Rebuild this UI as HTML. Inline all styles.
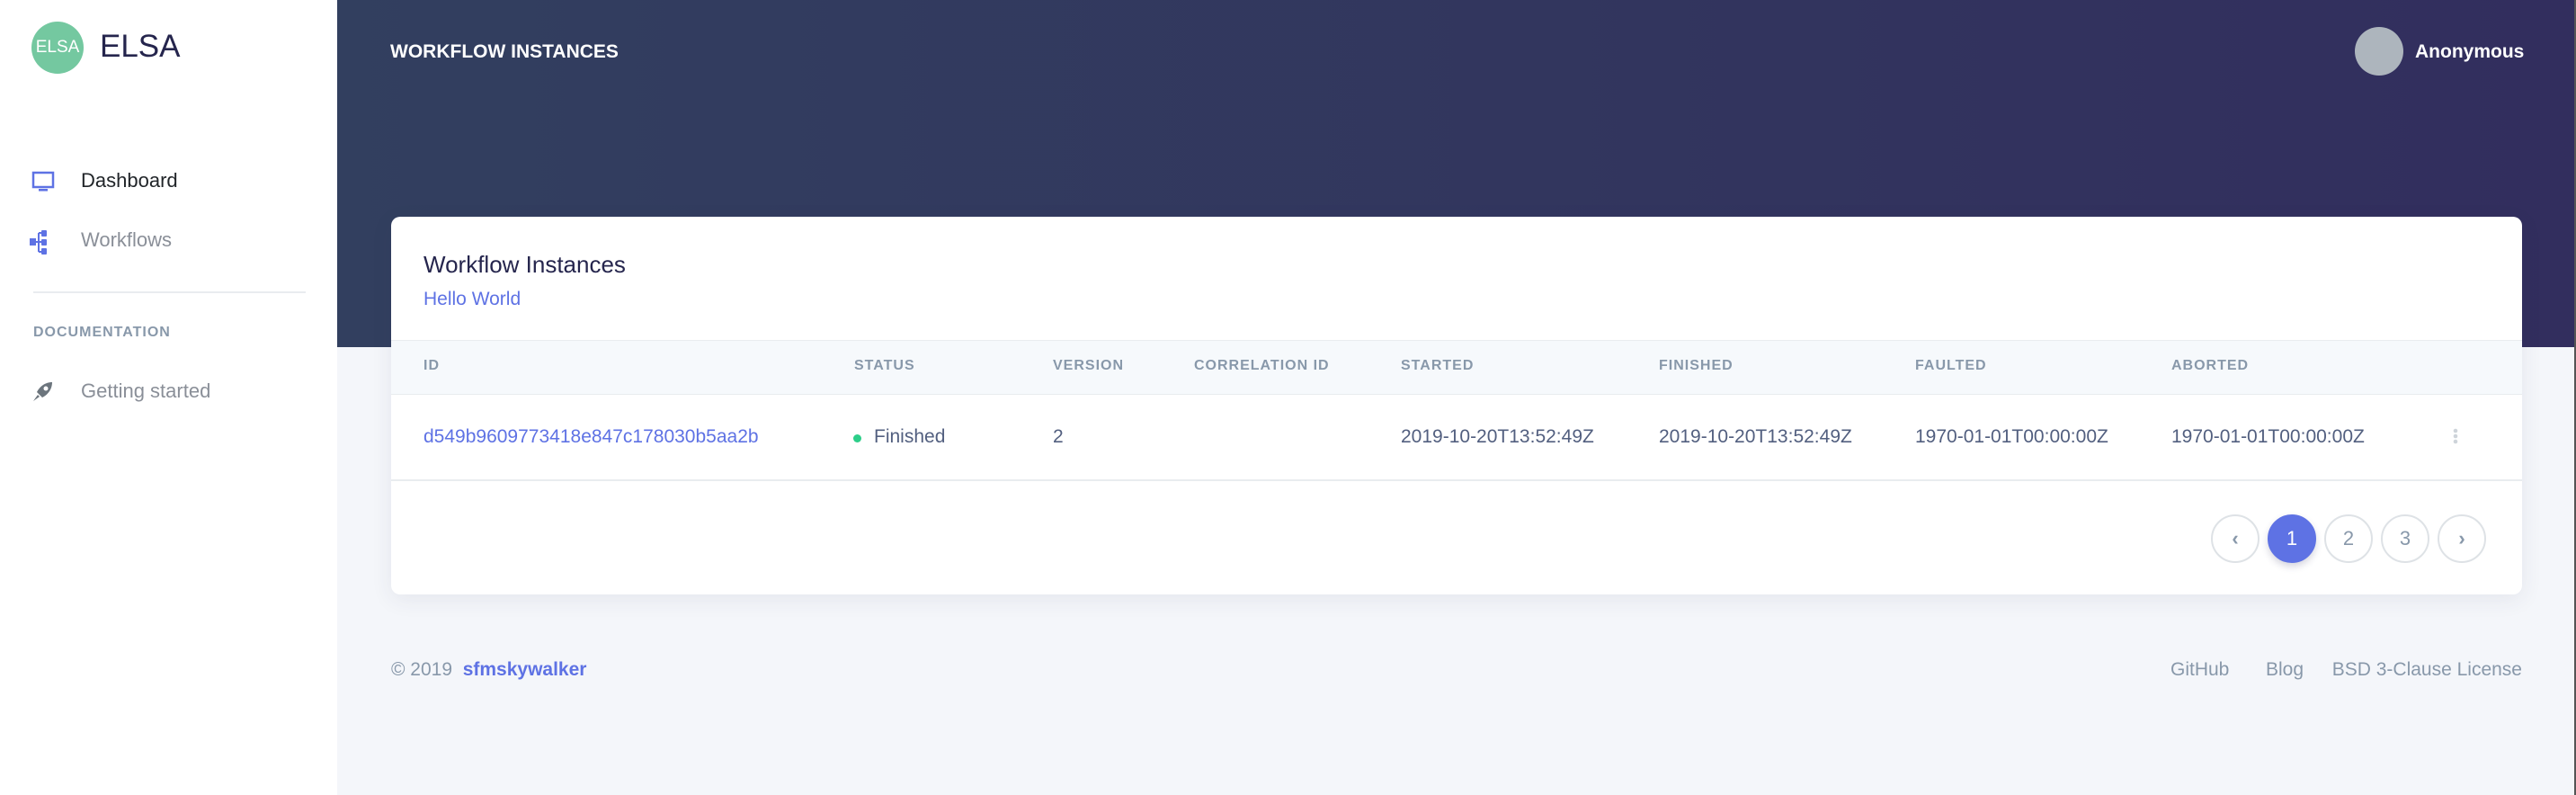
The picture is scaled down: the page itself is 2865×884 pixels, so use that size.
<!DOCTYPE html>
<html><head><meta charset="utf-8"><style>
*{box-sizing:border-box;margin:0;padding:0}
body{width:2865px;height:884px;overflow:hidden;background:#f4f6fa;font-family:"Liberation Sans",sans-serif;position:relative}
.side{position:absolute;left:0;top:0;width:375px;height:884px;background:#fff}
.hdr{position:absolute;left:375px;top:0;right:0;height:386px;background:linear-gradient(90deg,#323f5f 0%,#322e5e 100%)}
.abs{position:absolute;white-space:nowrap}
.card{position:absolute;left:435px;top:241px;width:2370px;height:420px;background:#fff;border-radius:10px;box-shadow:0 6px 24px rgba(50,50,93,.08)}
.th{position:absolute;top:398px;font-size:16px;letter-spacing:1px;color:#8898aa;font-weight:bold}
.td{position:absolute;top:474px;font-size:21px;color:#525f7f}
.pg{position:absolute;top:572px;width:54px;height:54px;border-radius:50%;border:2px solid #dee2e6;color:#8898aa;font-size:22px;text-align:center;line-height:50px;background:#fff}
</style></head><body>
<div class="side">
  <div class="abs" style="left:35px;top:24px;width:58px;height:58px;border-radius:50%;background:#74c8a0;color:#fff;font-size:19px;line-height:58px;text-align:center">ELSA</div>
  <div class="abs" style="left:111px;top:32px;font-size:35px;color:#25254d">ELSA</div>
  <svg class="abs" style="left:35px;top:190px" width="26" height="24" viewBox="0 0 26 24"><rect x="2" y="2" width="22" height="16" fill="none" stroke="#5e72e4" stroke-width="2.5"/><rect x="8" y="20" width="10" height="2.5" fill="#5e72e4"/></svg>
  <div class="abs" style="left:90px;top:188px;font-size:22px;color:#212529">Dashboard</div>
  <svg class="abs" style="left:33px;top:255px" width="24" height="30" viewBox="0 0 24 30"><rect x="0" y="10" width="7" height="8" fill="#5e72e4"/><rect x="13" y="1" width="6" height="7" rx="1" fill="#5e72e4"/><rect x="13" y="11" width="6" height="7" rx="1" fill="#5e72e4"/><rect x="13" y="21" width="6" height="7" rx="1" fill="#5e72e4"/><path d="M7 14H13M10 4V25M10 4H13M10 25H13" stroke="#5e72e4" stroke-width="2" fill="none"/></svg>
  <div class="abs" style="left:90px;top:254px;font-size:22px;color:#8a8f98">Workflows</div>
  <div class="abs" style="left:37px;top:324px;width:303px;height:2px;background:#e9ecef"></div>
  <div class="abs" style="left:37px;top:361px;font-size:16px;letter-spacing:1px;font-weight:bold;color:#8898aa">DOCUMENTATION</div>
  <svg class="abs" style="left:34px;top:423px" width="26" height="26" viewBox="0 0 26 26"><path d="M24 2C16 2 10 7 7 13L13 19C19 16 24 10 24 2Z" fill="#6c757d"/><circle cx="17" cy="9" r="2.5" fill="#fff"/><path d="M3 23L8 16L10 18Z" fill="#6c757d"/></svg>
  <div class="abs" style="left:90px;top:422px;font-size:22px;color:#8a8f98">Getting started</div>
</div>
<div class="hdr"></div>
<div class="abs" style="right:0;top:0;width:2px;height:884px;background:#555"></div>
<div class="abs" style="left:434px;top:46px;font-size:21px;font-weight:bold;color:#fff">WORKFLOW INSTANCES</div>
<div class="abs" style="left:2619px;top:30px;width:54px;height:54px;border-radius:50%;background:#adb5bd"></div>
<div class="abs" style="left:2686px;top:46px;font-size:21px;font-weight:bold;color:#fff">Anonymous</div>
<div class="card">
  <div class="abs" style="left:36px;top:38px;font-size:26px;color:#25254d">Workflow Instances</div>
  <div class="abs" style="left:36px;top:80px;font-size:21px;color:#5e72e4">Hello World</div>
  <div class="abs" style="left:0;top:137px;width:2370px;height:61px;background:#f6f9fc;border-top:1px solid #e9ecef;border-bottom:1px solid #e9ecef"></div>
  <div class="abs" style="left:0;top:292px;width:2370px;height:2px;background:#e9ecef"></div>
</div>
<div class="th" style="left:471px">ID</div>
<div class="th" style="left:950px">STATUS</div>
<div class="th" style="left:1171px">VERSION</div>
<div class="th" style="left:1328px">CORRELATION ID</div>
<div class="th" style="left:1558px">STARTED</div>
<div class="th" style="left:1845px">FINISHED</div>
<div class="th" style="left:2130px">FAULTED</div>
<div class="th" style="left:2415px">ABORTED</div>
<div class="td" style="left:471px;color:#5e72e4">d549b9609773418e847c178030b5aa2b</div>
<div class="abs" style="left:949px;top:483px;width:9px;height:9px;border-radius:50%;background:#2dce89"></div>
<div class="td" style="left:972px">Finished</div>
<div class="td" style="left:1171px">2</div>
<div class="td" style="left:1558px">2019-10-20T13:52:49Z</div>
<div class="td" style="left:1845px">2019-10-20T13:52:49Z</div>
<div class="td" style="left:2130px">1970-01-01T00:00:00Z</div>
<div class="td" style="left:2415px">1970-01-01T00:00:00Z</div>
<svg class="abs" style="left:2728px;top:476px" width="6" height="18"><circle cx="3" cy="3" r="2.3" fill="#ced4da"/><circle cx="3" cy="9" r="2.3" fill="#ced4da"/><circle cx="3" cy="15" r="2.3" fill="#ced4da"/></svg>
<div class="pg" style="left:2459px;font-weight:bold">‹</div>
<div class="pg" style="left:2522px;background:#5e72e4;border-color:#5e72e4;color:#fff;box-shadow:0 4px 8px rgba(50,50,93,.2)">1</div>
<div class="pg" style="left:2585px">2</div>
<div class="pg" style="left:2648px">3</div>
<div class="pg" style="left:2711px;font-weight:bold">›</div>
<div class="abs" style="left:435px;top:733px;font-size:21px;color:#8898aa">© 2019 &nbsp;<b style="color:#5e72e4">sfmskywalker</b></div>
<div class="abs" style="left:2414px;top:733px;font-size:21px;color:#8898aa">GitHub</div>
<div class="abs" style="left:2520px;top:733px;font-size:21px;color:#8898aa">Blog</div>
<div class="abs" style="left:2585px;top:733px;font-size:21px;color:#8898aa;width:220px;text-align:right">BSD 3-Clause License</div>
</body></html>
